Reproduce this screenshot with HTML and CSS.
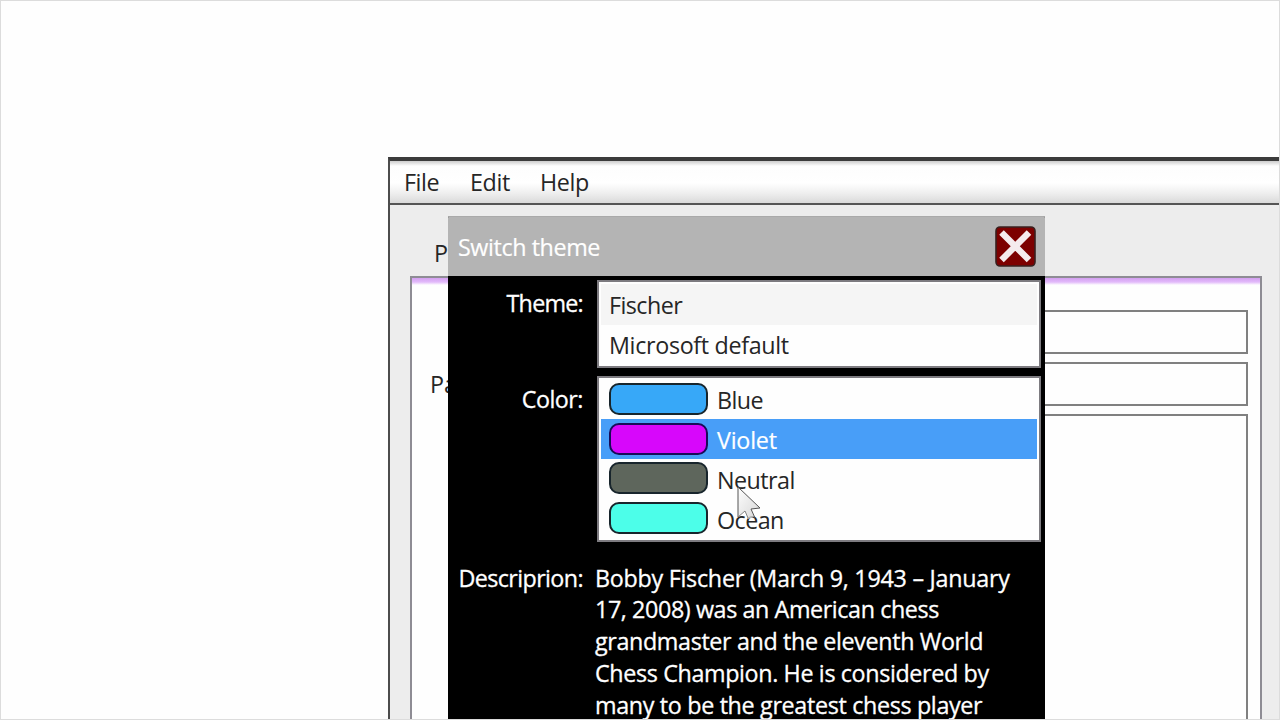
FILE: index.html
```html
<!DOCTYPE html>
<html lang="en">
<head>
<meta charset="utf-8">
<title>Switch theme</title>
<link rel="stylesheet" href="styles.css">
</head>
<body>
<main class="desktop">
  <section class="window">
    <nav class="menu"><span class="m-file">File</span><span class="m-edit">Edit</span><span class="m-help">Help</span></nav>
    <div class="workspace">
      <div class="tab">P</div>
      <div class="panel">
        <div class="field-row"><span class="label"></span><div class="field"></div></div>
        <div class="field-row"><span class="label">Pa</span><div class="field"></div></div>
        <div class="field-row tall"><span class="label"></span><div class="field"></div></div>
      </div>
    </div>
  </section>

  <section class="dialog">
    <header class="title-bar">
      <span class="title">Switch theme</span>
      <svg class="close" viewBox="0 0 41 41"><rect x="1" y="1" width="39" height="39" rx="4" fill="#7d0000" stroke="#38201f" stroke-width="1.6"/><path d="M6.5 6.5 34 34M34 6.5 6.5 34" stroke="#f5ebed" stroke-width="6.4"/></svg>
    </header>
    <div class="form">
      <div class="caption c-theme">Theme:</div>
      <div class="list themes">
        <div class="option current"><span class="t-fischer">Fischer</span></div>
        <div class="option"><span class="t-ms">Microsoft default</span></div>
      </div>
      <div class="caption c-color">Color:</div>
      <div class="list colors">
        <div class="option"><i class="swatch blue"></i><span>Blue</span></div>
        <div class="option selected"><i class="swatch violet"></i><span>Violet</span></div>
        <div class="option"><i class="swatch neutral"></i><span>Neutral</span></div>
        <div class="option"><i class="swatch ocean"></i><span>Ocean</span></div>
      </div>
      <div class="caption c-desc">Descriprion:</div>
      <div class="description">
        <div><span class="l1">Bobby Fischer (March 9, 1943 – January</span></div>
        <div><span class="l2">17, 2008) was an American chess</span></div>
        <div><span class="l3">grandmaster and the eleventh World</span></div>
        <div><span class="l4">Chess Champion. He is considered by</span></div>
        <div><span class="l5">many to be the greatest chess player</span></div>
      </div>
    </div>
  </section>

  <svg class="cursor" viewBox="0 0 26 38"><defs><linearGradient id="pointer" x1="0" y1="0" x2="1" y2="1"><stop offset="0" stop-color="#fff" stop-opacity=".9"/><stop offset="1" stop-color="#ccc" stop-opacity=".75"/></linearGradient></defs><path d="M1 1V31L8 25L11 33L17 31L14 23L23 22Z" fill="url(#pointer)"/><path d="M1 31V1L23 22L14 23L18 32" fill="none" stroke="#555" stroke-width="1"/><path d="M1 31 8 25 11 32" fill="none" stroke="#777" stroke-width=".9"/></svg>
</main>
</body>
</html>
```
FILE: styles.css
```css
* { box-sizing: border-box; }
body { margin: 0; font-family: "Open Sans", "Noto Sans", sans-serif; font-size: 23.3px; line-height: 32px; color: #262626; }
.desktop { position: relative; width: 1280px; height: 720px; overflow: hidden; padding: 156px 0 0 387px; background: #fefefe; border: 1px solid #dcdcdc; white-space: nowrap; }
.window { height: 600px; border-top: 4px solid #3b3b3b; border-left: 2px solid #4c4c4c; background: #ededed; }
.menu { display: flex; height: 44px; padding: 5px 0 0 14px; border-bottom: 2px solid #555; background: linear-gradient(#ccc 0, #fdfdfd 5px, #fff 22px, #efefef 32px, #dadada 42px); }
.menu span { letter-spacing: -.4px; }
.m-file { width: 66px; }
.m-edit { width: 70px; }
.workspace { padding: 32px 17px 0 20px; }
.tab { height: 39px; padding-left: 24px; }
.panel { display: flex; flex-direction: column; gap: 8px; height: 500px; padding: 32px 12px 0 18px; border: 2px solid #8e8c94; background: linear-gradient(#d3a0f0 0, #e2b9fa 4px, #fefefe 7px); }
.field-row { display: flex; flex: none; height: 44px; align-items: center; }
.field-row.tall { height: 400px; }
.label { width: 160px; }
.field { flex: 1; height: 100%; border: 2px solid #808080; background: #fefefe; }
.dialog { position: absolute; left: 447px; top: 215px; width: 597px; height: 520px; color: #fff; background: #000; border-radius: 2px 2px 0 0; overflow: hidden; }
.title-bar { display: flex; height: 60px; padding: 10px 9px 0 10px; justify-content: space-between; background: #b4b4b4; border-top: 1px solid #aaa; }
.title { line-height: 41px; letter-spacing: -.4px; -webkit-text-stroke: .2px; }
.close { width: 41px; height: 41px; margin-top: -1px; }
.form { display: grid; grid-template-columns: 149px 444px; grid-template-rows: 88px 166px auto; row-gap: 8px; padding: 4px 0 0; }
.caption { display: flex; justify-content: flex-end; padding: 7px 14px 0 0; letter-spacing: -.5px; -webkit-text-stroke: .3px; }
.c-desc { padding-top: 12px; letter-spacing: -.6px; }
.c-theme { letter-spacing: -.75px; }
.list { padding: 2px; border: 2px solid #7d7b80; background: #fefefe; color: #262626; }
.colors { padding-top: 1px; }
.option { display: flex; align-items: center; height: 39.8px; padding-left: 8px; gap: 9px; letter-spacing: -.55px; }
.option span { padding-top: 1px; }
.colors span { padding-top: 3px; }
.t-ms { letter-spacing: -.33px; }
.themes .current { height: 41px; background: #f5f5f5; }
.option.selected { color: #fff; background: #489ef8; letter-spacing: -.2px; -webkit-text-stroke: .2px; }
.swatch { width: 99px; height: 32px; border: 2px solid #18252c; border-radius: 10px; }
.blue { background: #37a8f8; }
.violet { background: #d707fb; border-color: #180c58; }
.neutral { background: #5e665c; }
.ocean { background: #4cfee9; }
.description { margin-left: -2px; padding-top: 12.5px; line-height: 31.75px; letter-spacing: -.36px; -webkit-text-stroke: .3px; }
.l1 { letter-spacing: -.26px; }
.l2 { letter-spacing: -.4px; }
.l5 { letter-spacing: -.33px; }
.cursor { position: absolute; left: 736px; top: 485px; width: 26px; height: 38px; }
```
